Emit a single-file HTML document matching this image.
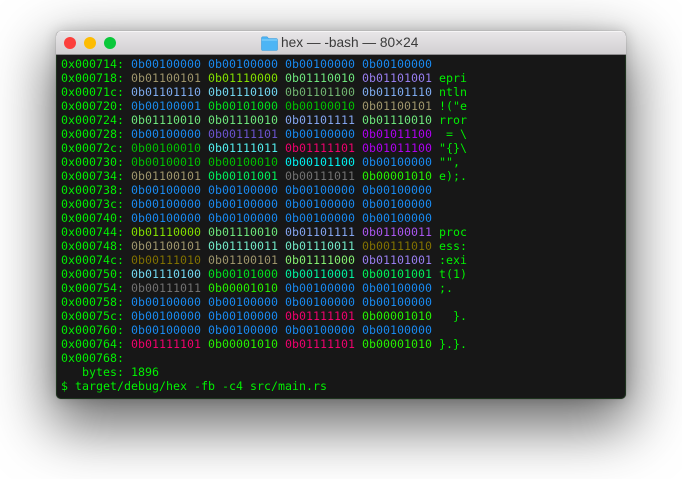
<!DOCTYPE html>
<html><head><meta charset="utf-8">
<style>
html,body{margin:0;padding:0;width:682px;height:479px;overflow:hidden;background:#fff}
#win{position:absolute;left:56px;top:31px;width:570px;height:368px;border-radius:5px;overflow:hidden;box-shadow:0 22px 58px 6px rgba(0,0,0,.58),0 0 14px rgba(0,0,0,.18),0 0 1px rgba(0,0,0,.35);background:#171717}
#bar{position:absolute;left:0;top:0;width:570px;height:23px;background:linear-gradient(#e9e7e9,#d2d0d2);border-bottom:1px solid #8f8d8f;box-shadow:inset 0 1px 0 #f6f5f6}
.d{position:absolute;top:6px;width:12px;height:12px;border-radius:50%}
#t{position:absolute;left:225px;top:4px;font:13.7px/16px "Liberation Sans",sans-serif;color:#3a3a3a;white-space:pre}
#f{position:absolute;left:205px;top:5px}
#edge{position:absolute;left:0;top:24px;width:570px;height:344px;box-sizing:border-box;border:1px solid rgba(40,90,40,.45);border-top:0;border-radius:0 0 5px 5px}
pre{position:absolute;left:5px;top:26px;margin:0;font:11.63px/14px "DejaVu Sans Mono",monospace;color:#00ff00;white-space:pre;-webkit-text-stroke:.08px #171717}
.a{color:#1a92ff}.e{color:#a89f72}.p{color:#8aee00}.r{color:#74f584}.i{color:#a186ff}.n{color:#86b6ff}.t{color:#78e4ff}.l{color:#78c078}.x1{color:#1c92f8}.lp{color:#00ee20}.q{color:#00cc00}.o{color:#8cb0ff}.eq{color:#7058dc}.bs{color:#b800ff}.lb{color:#58ffff}.rb{color:#ff0074}.cm{color:#00ffff}.rp{color:#00ff60}.sc{color:#787878}.nl{color:#28ff00}.s{color:#78f8d4}.c{color:#b45cff}.co{color:#887800}.xx{color:#8cff78}.on{color:#00ffa8}
</style></head><body>
<div id="win">
<div id="bar">
<div class="d" style="left:8px;background:#fc3f3c"></div>
<div class="d" style="left:28px;background:#fdbc02"></div>
<div class="d" style="left:48px;background:#0ac83a"></div>
<svg id="f" width="17" height="15" viewBox="0 0 17 15"><path d="M0.5 2.5Q0.5 0.8 2 0.8H6L7.5 2.5H15Q16.5 2.5 16.5 4V13Q16.5 14.5 15 14.5H2Q0.5 14.5 0.5 13Z" fill="#4db5f5" stroke="#3c9cdc" stroke-width=".6"/><path d="M0.8 4H16.2" stroke="#8fd6fb" stroke-width="1"/></svg>
<div id="t">hex — -bash — 80×24</div>
</div>
<pre>0x000714: <span class="a">0b00100000</span> <span class="a">0b00100000</span> <span class="a">0b00100000</span> <span class="a">0b00100000</span>
0x000718: <span class="e">0b01100101</span> <span class="p">0b01110000</span> <span class="r">0b01110010</span> <span class="i">0b01101001</span> epri
0x00071c: <span class="n">0b01101110</span> <span class="t">0b01110100</span> <span class="l">0b01101100</span> <span class="n">0b01101110</span> ntln
0x000720: <span class="x1">0b00100001</span> <span class="lp">0b00101000</span> <span class="q">0b00100010</span> <span class="e">0b01100101</span> !("e
0x000724: <span class="r">0b01110010</span> <span class="r">0b01110010</span> <span class="o">0b01101111</span> <span class="r">0b01110010</span> rror
0x000728: <span class="a">0b00100000</span> <span class="eq">0b00111101</span> <span class="a">0b00100000</span> <span class="bs">0b01011100</span>  = \
0x00072c: <span class="q">0b00100010</span> <span class="lb">0b01111011</span> <span class="rb">0b01111101</span> <span class="bs">0b01011100</span> "{}\
0x000730: <span class="q">0b00100010</span> <span class="q">0b00100010</span> <span class="cm">0b00101100</span> <span class="a">0b00100000</span> "",
0x000734: <span class="e">0b01100101</span> <span class="rp">0b00101001</span> <span class="sc">0b00111011</span> <span class="nl">0b00001010</span> e);.
0x000738: <span class="a">0b00100000</span> <span class="a">0b00100000</span> <span class="a">0b00100000</span> <span class="a">0b00100000</span>
0x00073c: <span class="a">0b00100000</span> <span class="a">0b00100000</span> <span class="a">0b00100000</span> <span class="a">0b00100000</span>
0x000740: <span class="a">0b00100000</span> <span class="a">0b00100000</span> <span class="a">0b00100000</span> <span class="a">0b00100000</span>
0x000744: <span class="p">0b01110000</span> <span class="r">0b01110010</span> <span class="o">0b01101111</span> <span class="c">0b01100011</span> proc
0x000748: <span class="e">0b01100101</span> <span class="s">0b01110011</span> <span class="s">0b01110011</span> <span class="co">0b00111010</span> ess:
0x00074c: <span class="co">0b00111010</span> <span class="e">0b01100101</span> <span class="xx">0b01111000</span> <span class="i">0b01101001</span> :exi
0x000750: <span class="t">0b01110100</span> <span class="lp">0b00101000</span> <span class="on">0b00110001</span> <span class="rp">0b00101001</span> t(1)
0x000754: <span class="sc">0b00111011</span> <span class="nl">0b00001010</span> <span class="a">0b00100000</span> <span class="a">0b00100000</span> ;.
0x000758: <span class="a">0b00100000</span> <span class="a">0b00100000</span> <span class="a">0b00100000</span> <span class="a">0b00100000</span>
0x00075c: <span class="a">0b00100000</span> <span class="a">0b00100000</span> <span class="rb">0b01111101</span> <span class="nl">0b00001010</span>   }.
0x000760: <span class="a">0b00100000</span> <span class="a">0b00100000</span> <span class="a">0b00100000</span> <span class="a">0b00100000</span>
0x000764: <span class="rb">0b01111101</span> <span class="nl">0b00001010</span> <span class="rb">0b01111101</span> <span class="nl">0b00001010</span> }.}.
0x000768:
   bytes: 1896
$ target/debug/hex -fb -c4 src/main.rs</pre>
<div id="edge"></div>
</div>
</body></html>
